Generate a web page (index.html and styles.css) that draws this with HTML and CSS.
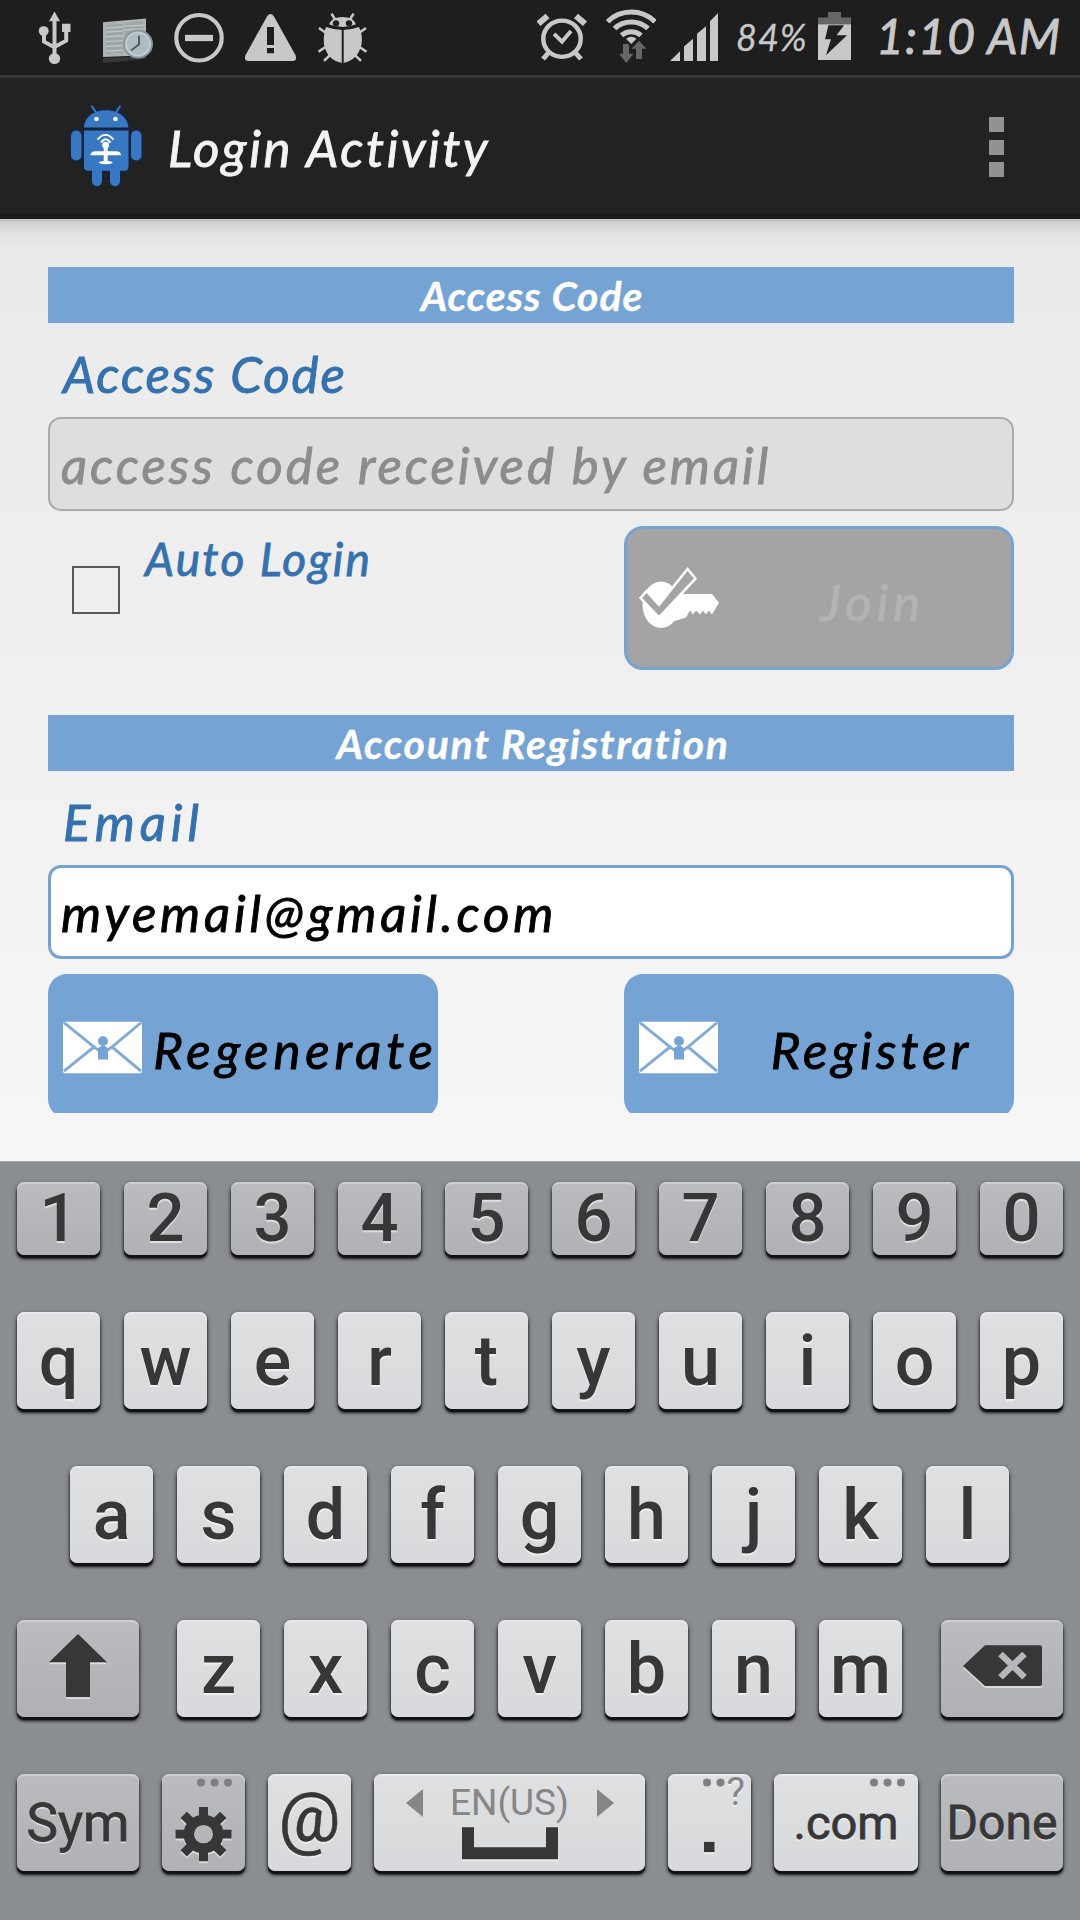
FILE: index.html
```html
<!DOCTYPE html>
<html lang="en">
<head>
<meta charset="utf-8">
<title>Login Activity</title>
<link rel="stylesheet" href="styles.css">
</head>
<body>
<div class="screen">
  <header class="status">
    <div class="status-left">
      <svg class="icon usb" width="34" height="75" viewBox="38 0 34 77.500" preserveAspectRatio="none"><path d="M54.500 20V58M44 32v11l10.500 6M66.200 30v12L54.500 48.500" fill="none" stroke="#c8c8c8" stroke-width="4"/><path d="M54.500 12l5.600 10H49z"/><circle cx="54.500" cy="60.500" r="5.700"/><circle cx="43.700" cy="32" r="5"/><path d="M62 24.500h8.500v8.500H62z"/></svg>
      <svg class="icon" width="50" height="75" viewBox="104 0 50 77.500" preserveAspectRatio="none"><path d="M104 23l43-4v38l-43 2z" fill="#aeb4b5"/><path d="M107 26l17-1.500v30l-17 1zM126 24l18-2v31l-18 1z" fill="#9da5a7"/><path d="M107 29l17-1M107 33l17-1M107 38l17-1M107 43l17-1M107 48l17-1M107 53l17-1M126 27l18-1M126 31l18-1" stroke="#bfc6c7" stroke-width="1.500"/><path d="M104 60l43-2v3l-43 4z" fill="#383838"/><circle cx="139" cy="45.500" r="15" fill="#87969f"/><circle cx="139" cy="45.500" r="12" fill="#b0bbbf" stroke="#c1cbd0" stroke-width="2"/><path d="M140 37v9l-8 6" fill="none" stroke="#46535b" stroke-width="1.800"/></svg>
      <svg class="icon" width="50" height="75" viewBox="174 0 50 77.500" preserveAspectRatio="none"><ellipse cx="199" cy="39" rx="22.700" ry="23.500" fill="none" stroke="#c8c8c8" stroke-width="4.200"/><path d="M185 36h28v6.500h-28z"/></svg>
      <svg class="icon" width="52" height="75" viewBox="245 0 52 77.500" preserveAspectRatio="none"><path d="M267 17q3.500-5 7 0l21.500 40q2 6-3 6h-44q-5 0-3-6z"/><path d="M267 28h7v18.500h-7zM267 49.500h7V55h-7z" fill="#1e1e1e"/></svg>
      <svg class="icon" width="50" height="75" viewBox="318 0 50 77.500" preserveAspectRatio="none"><path d="M331.500 14l3.500 6M353.500 14l-3.500 6M319 29l7 5M366 29l-7 5M318.500 53.500l7-5M366.500 53.500l-7-5M324 63l6-6M361 63l-6-6" stroke="#c8c8c8" stroke-width="2.600"/><path d="M329 25q3-7.500 13.700-7.500T356 25q-13 6-27 0z"/><path d="M326 28q17 6 33 0 4 8 2.500 18-4 17-19 19-15-2-18.500-19-1-10 2-18z"/><path d="M342.700 30v35" stroke="#1e1e1e" stroke-width="2"/><circle cx="336" cy="24" r="3.200" fill="#1e1e1e"/><circle cx="349" cy="24" r="3.200" fill="#1e1e1e"/></svg>
    </div>
    <div class="status-right">
      <svg class="icon alarm" width="50" height="75" viewBox="537 0 50 77.500" preserveAspectRatio="none"><circle cx="562" cy="40" r="18.700" fill="none" stroke="#c8c8c8" stroke-width="4.500"/><path d="M538.500 24.500l9-8M585 24.500l-9-8" fill="none" stroke="#c8c8c8" stroke-width="6"/><path d="M549 54l-6 7M575 54l6 7" stroke="#c8c8c8" stroke-width="5"/><path d="M554 35l8 8 9-11" fill="none" stroke="#c8c8c8" stroke-width="4"/></svg>
      <svg class="icon" width="50" height="75" viewBox="606 0 50 77.500" preserveAspectRatio="none"><g fill="none" stroke="#c8c8c8" stroke-width="5.200"><path d="M607.500 22.500a33 33 0 0 1 47.500 0M614.500 29.500a24 24 0 0 1 33.500 0M621.500 36.500a14.500 14.500 0 0 1 19.500 0"/></g><path d="M626 40q5-4 10.500 0L631.300 45.500z"/><path d="M623 45.500h6v10h4.500L626.300 65 619 55.500h4zM636 61v-10.500h-4.500L639 42l7.500 8.500H642V61z" fill="#666"/></svg>
      <svg class="icon signal" width="49" height="75" viewBox="670 0 49 77.500" preserveAspectRatio="none"><path d="M670 63l10-10v10zM684 63V48l9-8v23zM697 63V35l9-8v36zM710 63V22l8-8.500V63z"/></svg>
      <span class="hand battery-text">84%</span>
      <svg class="icon" width="34" height="75" viewBox="818 0 34 77.500" preserveAspectRatio="none"><path d="M828 12.500h13V18h10v7h-33v-7h10z" fill="#666"/><path d="M818 25h33v37h-33z"/><path d="M828.500 26H844l-7.500 10.500H847L826 57l5-16.500h-6z" fill="#1e1e1e"/></svg>
      <span class="hand clock">1:10 AM</span>
    </div>
  </header>

  <div class="action-bar">
    <svg class="app-icon" width="76" height="89" viewBox="68 105 76 92" preserveAspectRatio="none"><g fill="#3878c3"><path d="M84 132.500c1-24 43-24 44.500 0zM84 135.500h44.500V173q0 4-4 4H88q-4 0-4-4z"/><rect x="71" y="135.500" width="10.500" height="31" rx="5.200"/><rect x="131" y="135.500" width="10.500" height="31" rx="5.200"/><path d="M92 174h10v14a5 5 0 0 1-10 0zM110 174h10v14a5 5 0 0 1-10 0z"/></g><path d="M91.500 110l5 7.500M120.500 110l-5 7.500" stroke="#3878c3" stroke-width="2"/><circle cx="96.500" cy="123.500" r="2.300" fill="#fff"/><circle cx="115.500" cy="123.500" r="2.300" fill="#fff"/><g fill="none" stroke="#fff" stroke-width="2"><path d="M97.500 145q8-10 16 0M101 148q4.500-7 9.500 0"/></g><circle cx="105.700" cy="150.500" r="3.500" fill="#fff"/><path d="M103.700 150h4v17q5 .5 5 2-7 3-14 0 0-1.500 5-2zM90.500 161q0-4 5-4h20.500q5 0 5 4z" fill="#fff"/></svg>
    <h1 class="hand title">Login Activity</h1>
    <div class="overflow"><i></i><i></i><i></i></div>
  </div>

  <main class="content">
    <section class="panel">
      <h2 class="hand banner"><span class="t-access">Access Code</span></h2>
      <label class="hand label"><span class="l-access">Access Code</span></label>
      <div class="hand field disabled"><span class="f-code">access code received by email</span></div>
      <div class="row">
        <div class="auto"><div class="checkbox"></div><span class="hand auto-text">Auto Login</span></div>
        <div class="button join">
          <svg width="82" height="64" viewBox="638 578 82 66" preserveAspectRatio="none"><ellipse cx="661" cy="618" rx="18.500" ry="24" fill="#fff"/><path d="M678 607h34l7 9-7 12-3-4-3 4-3-4-3 4-4-4-3 4-3-4-4 7-12 4z" fill="#fff"/><path d="M640.500 611l6-7 12.500 14 28.500-37 8 10-36.500 40z" fill="#a4a4a4" stroke="#fff" stroke-width="2.500"/></svg>
          <span class="hand btn-text t-join">Join</span>
        </div>
      </div>
    </section>
    <section class="panel">
      <h2 class="hand banner"><span class="t-account">Account Registration</span></h2>
      <label class="hand label"><span class="l-email">Email</span></label>
      <div class="hand field"><span class="f-email">myemail@gmail.com</span></div>
      <div class="row clipped">
        <div class="button">
          <svg width="82" height="64" viewBox="0 0 82 66" preserveAspectRatio="none"><rect x="1" y="8" width="79" height="53" rx="2" fill="#fff"/><path d="M2 9l30 25L2 59M79 9L50 34l29 25M32 34l9 7 9-7" fill="none" stroke="#82abd7" stroke-width="3"/><circle cx="41" cy="28" r="5" fill="#75a3d3"/><path d="M36 35l5-3 5 3v12H36z" fill="#75a3d3"/></svg>
          <span class="hand btn-text t-regen">Regenerate</span>
        </div>
        <div class="button">
          <svg width="82" height="64" viewBox="0 0 82 66" preserveAspectRatio="none"><rect x="1" y="8" width="79" height="53" rx="2" fill="#fff"/><path d="M2 9l30 25L2 59M79 9L50 34l29 25M32 34l9 7 9-7" fill="none" stroke="#82abd7" stroke-width="3"/><circle cx="41" cy="28" r="5" fill="#75a3d3"/><path d="M36 35l5-3 5 3v12H36z" fill="#75a3d3"/></svg>
          <span class="hand btn-text t-register">Register</span>
        </div>
      </div>
    </section>
  </main>

  <div class="keyboard">
    <div class="keys numbers"><b class="key">1</b><b class="key">2</b><b class="key">3</b><b class="key">4</b><b class="key">5</b><b class="key">6</b><b class="key">7</b><b class="key">8</b><b class="key">9</b><b class="key">0</b></div>
    <div class="keys"><b class="key">q</b><b class="key">w</b><b class="key">e</b><b class="key">r</b><b class="key">t</b><b class="key">y</b><b class="key">u</b><b class="key">i</b><b class="key">o</b><b class="key">p</b></div>
    <div class="keys home"><b class="key">a</b><b class="key">s</b><b class="key">d</b><b class="key">f</b><b class="key">g</b><b class="key">h</b><b class="key">j</b><b class="key">k</b><b class="key">l</b></div>
    <div class="keys spread">
      <b class="key dark wide"><svg class="glyph" width="122" height="97" viewBox="0 0 122 100" preserveAspectRatio="none"><path d="M61 14.500L90 43.500H73v36H49v-36H32z"/></svg></b>
      <div class="keys letters"><b class="key">z</b><b class="key">x</b><b class="key">c</b><b class="key">v</b><b class="key">b</b><b class="key">n</b><b class="key">m</b></div>
      <b class="key dark wide"><svg class="glyph" width="122" height="97" viewBox="0 0 122 100" preserveAspectRatio="none"><path d="M22 47.500L44 26h55q2 0 2 2v38q0 2-2 2H44z"/><path d="M59.500 35l24 24M83.500 35l-24 24" stroke="#b6b7bb" stroke-width="6.500"/></svg></b>
    </div>
    <div class="keys spread">
      <b class="key dark wide sym">Sym</b>
      <b class="key dark"><svg class="glyph" width="83" height="97" viewBox="0 0 83 100" preserveAspectRatio="none"><g transform="translate(41.500 62)"><path d="M-4.500-28h9v56h-9zM-28-4.500h56v9h-56z"/><path d="M-4.500-28h9v56h-9zM-28-4.500h56v9h-56z" transform="rotate(45)"/><circle r="20"/><circle r="9.500" fill="#b5b6ba"/></g></svg><svg class="dots" width="83" height="20"><circle cx="39" cy="8.500" r="4"/><circle cx="52.500" cy="8.500" r="4"/><circle cx="66" cy="8.500" r="4"/></svg></b>
      <b class="key at">@</b>
      <b class="key space"><svg class="glyph" width="271" height="97" viewBox="0 0 271 100" preserveAspectRatio="none"><path d="M88 55h12v20.500h72V55h12v33H88z"/></svg><span class="lang"><svg width="17" height="28"><path d="M0 14L17 0v28z"/></svg><span class="lang-text">EN(US)</span><svg width="17" height="28"><path d="M17 14L0 0v28z"/></svg></span></b>
      <b class="key"><svg class="glyph" width="83" height="97" viewBox="0 0 83 100" preserveAspectRatio="none"><path d="M36 70h10.500v10.500H36z"/></svg><svg class="dots" width="83" height="20"><circle cx="39" cy="8.500" r="4"/><circle cx="52.500" cy="8.500" r="4"/></svg><span class="hint">?</span></b>
      <b class="key com">.com<svg class="dots" width="144" height="20"><circle cx="100" cy="8.500" r="4"/><circle cx="113.500" cy="8.500" r="4"/><circle cx="127" cy="8.500" r="4"/></svg></b>
      <b class="key dark wide done">Done</b>
    </div>
  </div>
</div>
</body>
</html>
```

FILE: styles.css
```css
* { box-sizing: border-box; margin: 0; padding: 0; }
body { width: 1080px; height: 1920px; overflow: hidden; background: #1e1e1e; }
.screen { display: flex; flex-direction: column; width: 1080px; height: 1920px; }
svg { display: block; flex: none; }
.hand { font-family: "Choco cooky", Lato, sans-serif; font-style: italic; font-weight: 400; white-space: pre; -webkit-text-stroke: .9px currentColor; }

.status { display: flex; justify-content: space-between; height: 78px; padding: 0 20px 0 38px; background: #1e1e1e; border-bottom: 3px solid #393939; color: #c8c8c8; }
.status-left, .status-right { display: flex; height: 75px; }
.status-left { gap: 21px; }
.status-left .usb { margin-right: 10px; }
.icon { fill: #c8c8c8; }
.status-right { gap: 14px; }
.status-right .alarm { margin-right: 5px; }
.status-right .signal { margin-right: 3px; }
.battery-text { width: 72px; margin-right: -4px; font-size: 36px; line-height: 75px; letter-spacing: 1px; -webkit-text-stroke-width: .3px; }
.clock { width: 184px; margin-left: 10px; font-size: 48px; line-height: 71px; letter-spacing: 1.2px; }

.action-bar { display: flex; align-items: center; height: 141px; padding: 0 76px 0 68px; background: #222; border-bottom: 6px solid #1b1b1b; }
.app-icon { filter: drop-shadow(0 0 2px #0a2458); }
.title { margin-left: 24px; padding-top: 5px; font-size: 51px; line-height: 60px; letter-spacing: 2.6px; color: #f3f3f3; }
.overflow { display: flex; flex-direction: column; gap: 7.500px; margin: 3px 0 0 auto; }
.overflow i { width: 15px; height: 15px; background: #929292; }

.content { height: 942px; padding: 48px 66px 0 48px; background: linear-gradient(#c4c4c4 0 3px, rgba(205,205,205,.9) 3px, rgba(220,220,220,.5) 15px, rgba(232,232,232,0) 36px), linear-gradient(#eaeaea, #f6f6f6); }
.panel { height: 448px; }
.banner { height: 56px; background: #75a3d3; color: #fff; font-size: 41px; font-weight: 700; line-height: 57px; text-align: center; -webkit-text-stroke-width: .3px; }
.label { display: block; height: 94px; padding: 7px 0 0 15px; font-size: 51px; line-height: 88px; color: #3571ae; }
.field { height: 94px; padding-left: 10px; border: 3px solid #75a3d3; border-radius: 13px; background: #fff; color: #000; font-size: 51px; line-height: 90px; }
.field.disabled { border: 2px solid #aaa; background: #dedede; color: #8c8c8c; padding-left: 11px; line-height: 92px; }
.row { display: flex; justify-content: space-between; height: 144px; margin-top: 15px; }
.clipped { height: 139px; overflow: hidden; }
.auto { display: flex; align-items: flex-start; }
.checkbox { width: 48px; height: 48px; margin: 40px 0 0 24px; border: 2px solid #595959; }
.auto-text { margin-left: 25px; font-size: 46px; line-height: 66px; letter-spacing: 2.3px; color: #3571ae; }
.button { display: flex; align-items: center; flex: none; width: 390px; height: 144px; padding-left: 14px; border-radius: 19px; background: #75a3d3; color: #000; }
.join { padding-left: 11px; background: #a4a4a4; border: 3px solid #75a3d3; color: #b3b3b3; }
.btn-text { flex: 1; padding-top: 7px; text-align: center; font-size: 51px; line-height: 60px; }
.t-access { margin-left: 2px; letter-spacing: .9px; }
.t-account { margin-left: 4px; letter-spacing: 1.6px; }
.l-access { letter-spacing: 1.9px; }
.l-email { letter-spacing: 5px; }
.f-code { letter-spacing: 3px; }
.f-email { letter-spacing: 3.8px; }
.t-join { padding-left: 15px; letter-spacing: 5px; }
.t-regen { padding-left: 9px; letter-spacing: 4.8px; }
.t-register { padding-left: 9px; letter-spacing: 4.1px; }

.keyboard { display: flex; flex-direction: column; gap: 57px; height: 759px; padding: 20px 17px 0; border-top: 1px solid #a5a8ab; background: #8a8d91; }
.keys { display: flex; gap: 24px; }
.home { padding-left: 53px; }
.spread { justify-content: space-between; gap: 0; }
.letters { padding-left: 12px; padding-right: 13px; gap: 24px; }
.key { position: relative; flex: none; display: flex; align-items: center; justify-content: center; width: 83px; height: 97px; border-radius: 7px; background: linear-gradient(#dee0e1, #d8d9dc); box-shadow: inset 0 2px 1px rgba(255,255,255,.3), 0 3px 1px #111214, 0 4px 3px #222, 0 2px 5px rgba(0,0,0,.5); color: #373737; font: 500 70px/98px Roboto, sans-serif; text-shadow: 0 2px 1px rgba(255,255,255,.6); }
.numbers .key { height: 73px; font-size: 67px; line-height: 73px; }
.numbers .key, .key.dark { background: linear-gradient(#bbbcc0, #b0b1b5); }
.key.wide { width: 122px; }
.key.sym { font-size: 53px; font-weight: 400; -webkit-text-stroke: .8px #373737; }
.key.done, .key.com { font-size: 48px; font-weight: 400; -webkit-text-stroke: .8px #373737; }
.key.at { padding-bottom: 10px; font-size: 69px; font-weight: 400; -webkit-text-stroke: .6px #373737; }
.key.com { width: 144px; font-size: 47px; }
.key.space { width: 271px; align-items: flex-start; }
.glyph, .dots { position: absolute; left: 0; top: 0; }
.glyph { fill: #373737; filter: drop-shadow(0 2px 0 rgba(255,255,255,.5)); }
.dots { fill: #7e7f81; }
.hint { position: absolute; right: 6px; top: 0; font-size: 39px; font-weight: 400; line-height: 37px; color: #868686; }
.lang { display: flex; align-items: center; justify-content: space-between; width: 208px; height: 57px; fill: #868686; color: #868686; }
.lang-text { font-size: 37px; font-weight: 400; line-height: 57px; text-shadow: none; }
```
